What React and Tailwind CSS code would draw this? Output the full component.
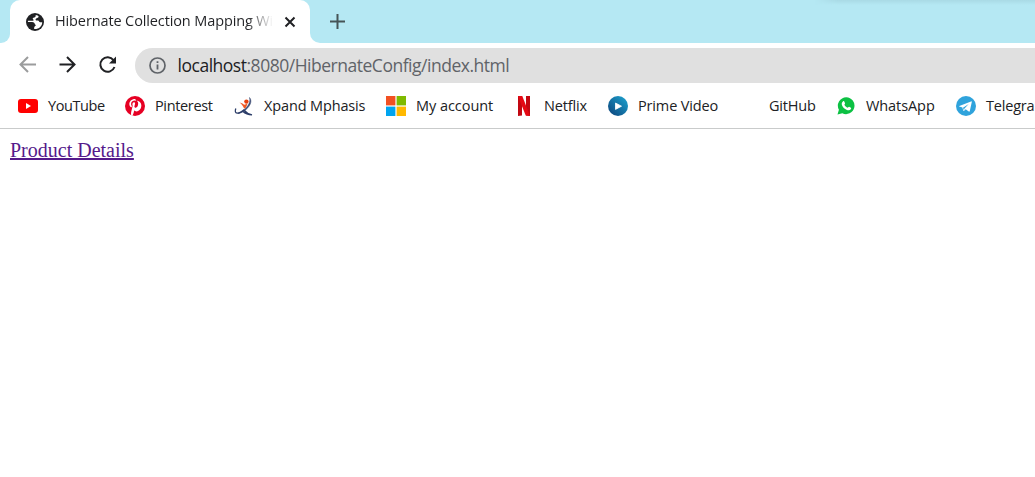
import React from "react";

function Globe() {
  return (
    <svg className="h-[18px] w-[18px] shrink-0" viewBox="0 0 18 18">
      <circle cx="9" cy="9" r="9" fill="#202124" />
      <path
        d="M9.600 1.900c.3 1 .1 1.700-.7 2.300-.8.5-2.200.3-2.200 1.300 0 .9 1.200.9.9 1.700-.3.8-1.500.6-2.400.6H2.100C1.900 8.200 1.900 8.600 1.900 9h4.300c1.300 0 2.300.7 2.500 1.800.1.8.9.8 1 1.500.1.7-.8.9-1.200 1.500-.5.8-.3 1.500-.3 2.200C13 16.300 16.200 13.200 16.200 9.200c-1 .1-2 .2-2.700-.3-.7-.5-.6-1.300-1.500-1.400-.8-.1-1.700.3-2.200-.3-.6-.7.2-1.500.9-1.900.9-.5 2-.6 1.900-1.700-.1-.8-1.400-1.500-3-1.700Z"
        fill="#fff"
      />
    </svg>
  );
}

const stroke = { fill: "none", strokeWidth: 2 };

function BackArrow() {
  return (
    <svg className="h-5 w-5 shrink-0" viewBox="0 0 20 20" stroke="#9b9c9d" {...stroke}>
      <path d="M18 9.500H3M10 2 2.500 9.500 10 17" />
    </svg>
  );
}

function ForwardArrow() {
  return (
    <svg className="h-5 w-5 shrink-0" viewBox="0 0 20 20" stroke="#202124" {...stroke}>
      <path d="M1.500 9.500h15M9 2l7.500 7.500L9 17" />
    </svg>
  );
}

function Reload() {
  return (
    <svg className="h-5 w-5 shrink-0" viewBox="0 0 20 20">
      <path d="M15.500 5.100A7.300 7.300 0 1 0 16.500 12" stroke="#202124" {...stroke} />
      <path d="M18 1.500V8.500H11Z" fill="#202124" />
    </svg>
  );
}

function YouTube() {
  return (
    <svg className="h-5 w-5" viewBox="0 0 20 20">
      <rect y="3" width="20" height="14" rx="3" fill="#f00" />
      <path d="m8 7 5 3-5 3Z" fill="#fff" />
    </svg>
  );
}

function Pinterest() {
  return (
    <svg className="h-5 w-5" viewBox="0 0 24 24">
      <circle cx="12" cy="12" r="12" fill="#e60023" />
      <path
        d="M12.300 4.200C7.600 4.200 5.200 7.300 5.200 10.300c0 1.900.8 3.300 2.200 3.900.3.1.5 0 .6-.3l.2-.9c.1-.3 0-.4-.2-.7-.5-.6-.7-1.100-.7-2.100 0-2.200 1.700-4.100 4.600-4.100 2.500 0 3.900 1.500 3.900 3.600 0 2.700-1.200 4.900-3 4.900-1 0-1.700-.8-1.500-1.800.3-1.200.8-2.400.8-3.300 0-.8-.4-1.500-1.300-1.500-1 0-1.900 1.100-1.900 2.600 0 .9.3 1.600.3 1.600l-1.800 7.700c-.3 1.300-.2 2.900 0 4.100l1.300.4c.6-.9 1.300-2.300 1.600-3.500l.8-3.200c.4.8 1.600 1.400 2.700 1.400 3.400 0 5.800-3.200 5.800-7.300 0-3.200-2.600-5.600-6.300-5.600Z"
        fill="#fff"
        transform="translate(0 -.6)"
      />
    </svg>
  );
}

function Xpand() {
  return (
    <svg className="h-5 w-5" viewBox="0 0 20 20">
      <circle cx="12.400" cy="5.600" r="2.200" fill="#e8400f" />
      <path d="M5.500 6.500C8 7 9.300 8 10.200 8.700l3.300-1-1.500 3.800-1.800 1.200C9 10 7.800 8.200 5.500 6.500Z" fill="#f15a24" />
      <path d="M15.500 1.500c2.600 3 1.300 7-1.700 10.300C11 15 7.500 17.200 4 17.500c3.300-1.300 6.200-3.300 8.600-6.200 2.600-3.200 4-6.500 2.900-9.800Z" fill="#3b4a72" stroke="#3b4a72" strokeWidth=".5" />
      <path d="M1.800 12.500c-1.100 3-.4 4.500 1.300 4.700 2 .1 4.500-1.400 6.700-3.200 2.200 2.600 4.800 4.200 8.200 4.800-4 0-6.800-1.100-9-3.300" fill="none" stroke="#2b3d68" strokeWidth="1.300" />
    </svg>
  );
}

function Microsoft() {
  return (
    <svg className="h-5 w-5" viewBox="0 0 20 20">
      <path d="M0 0h9.400v9.400H0Z" fill="#f25022" />
      <path d="M10.600 0H20v9.400h-9.400Z" fill="#7fba00" />
      <path d="M0 10.600h9.400V20H0Z" fill="#00a4ef" />
      <path d="M10.600 10.600H20V20h-9.400Z" fill="#ffb900" />
    </svg>
  );
}

function Netflix() {
  return (
    <svg className="h-5 w-5" viewBox="0 0 20 20">
      <path d="M4 0h4v19.500L4 20ZM12 0h4v20l-4-.5Z" fill="#c20812" />
      <path d="M4 0h4.300L16 20l-4.300-.5Z" fill="#e50914" />
    </svg>
  );
}

function PrimeVideo() {
  return (
    <svg className="h-5 w-5" viewBox="0 0 20 20">
      <defs>
        <linearGradient id="prime" x1="1" y1="0" x2="0" y2="1">
          <stop offset=".1" stopColor="#1c9dca" />
          <stop offset=".9" stopColor="#0d4a81" />
        </linearGradient>
      </defs>
      <circle cx="10" cy="10" r="10" fill="url(#prime)" />
      <path d="m7.500 7 6 3.200-6 3.200Z" fill="#fff" stroke="#fff" strokeWidth=".8" strokeLinejoin="round" />
    </svg>
  );
}

function WhatsApp() {
  return (
    <svg className="h-5 w-5" viewBox="0 0 20 20">
      <path d="M10.300 1.300a8.400 8.400 0 1 1-4 15.900L1.500 18.500l1.400-4.700A8.400 8.400 0 0 1 10.300 1.300Z" fill="#0cc143" />
      <path d="M6.900 5.400c.5-.5 1.100-.4 1.400.2l.7 1.600c.2.5-.6 1.200-.6 1.500.6 1.400 1.900 2.500 3.300 3 .4 0 .9-1.100 1.400-.9l1.800.9c.4.2.3 1-.1 1.600-.8 1.100-2.300 1.300-3.900.6-2.500-1-4.300-2.900-5-5-.4-1.500 0-2.700 1-3.500Z" fill="#fff" />
    </svg>
  );
}

function Telegram() {
  return (
    <svg className="h-5 w-5" viewBox="0 0 20 20">
      <circle cx="10" cy="10" r="10" fill="#2fa3dc" />
      <path d="M3.300 10 15 5.400c.5-.2.9.1.8.7l-2 9c-.1.6-.6.7-1.100.4l-3-2.200-1.500 1.500c-.5.5-.9.3-1-.2l-.8-3.100-3-.9c-.6-.2-.6-.4-.1-.6Z" fill="#fff" />
      <path d="m7 11.700 5.700-3.800-4.400 4.800-.3 2Z" fill="#2fa3dc" />
    </svg>
  );
}

const bookmarks = [
  { name: "YouTube", Icon: YouTube, box: "w-[107px]", track: "tracking-[-0.4px]" },
  { name: "Pinterest", Icon: Pinterest, box: "w-[109px]", track: "tracking-[-0.35px]" },
  { name: "Xpand Mphasis", Icon: Xpand, box: "w-[152px]", track: "tracking-[-0.14px]" },
  { name: "My account", Icon: Microsoft, box: "w-[128px]", track: "tracking-[-0.05px]" },
  { name: "Netflix", Icon: Netflix, box: "w-[94px]", track: "tracking-[-0.15px]" },
  { name: "Prime Video", Icon: PrimeVideo, box: "w-[131px]", track: "tracking-[-0.15px]" },
  { name: "GitHub", box: "w-[97px]", track: "tracking-[-0.2px]" },
  { name: "WhatsApp", Icon: WhatsApp, box: "w-[120px]", track: "tracking-[-0.08px]" },
  { name: "Telegra", Icon: Telegram, box: "w-[79px]", track: "tracking-[-0.2px]" },
];

export default function App() {
  return (
    <div className="h-[477px] w-[1035px] overflow-hidden bg-white font-['Open_Sans','Noto_Sans',sans-serif] text-[#202124]">
      <header className="relative flex h-[43px] bg-[#b5e8f3]">
        <div className="w-[10px] bg-white">
          <div className="h-full rounded-br-[9px] bg-[#b5e8f3]" />
        </div>
        <div className="bg-[#b5e8f3]">
          <div className="flex h-[43px] w-[300px] items-center rounded-t-[10px] bg-white pl-4">
            <Globe />
            <div className="mb-px ml-[11px] w-[218px] overflow-hidden whitespace-nowrap bg-linear-to-r from-[#202124] from-88% to-transparent bg-clip-text text-[14.500px] leading-5 tracking-[-0.12px] text-transparent">
              Hibernate Collection Mapping Wi
            </div>
            <svg className="ml-[11px] h-3 w-3 shrink-0" viewBox="0 0 12 12" stroke="#202124" {...stroke}>
              <path d="m1.500 1.500 9 9m0-9-9 9" />
            </svg>
          </div>
        </div>
        <div className="grow bg-white">
          <div className="flex h-full items-center rounded-bl-[10px] bg-[#b5e8f3] pl-5">
            <svg className="h-[15px] w-[15px]" viewBox="0 0 15 15" stroke="#465457" {...stroke}>
              <path d="M7.500 0v15M0 7.500h15" />
            </svg>
          </div>
        </div>
        <div className="absolute top-0 right-0 h-[5px] w-[220px] bg-linear-to-b from-[#a9dae5] to-[#b5e8f3] mask-l-from-90% mask-l-to-100%" />
      </header>

      <nav className="flex h-11 items-center pl-[18px]">
        <BackArrow />
        <div className="w-5" />
        <ForwardArrow />
        <div className="w-5" />
        <Reload />
        <div className="ml-[17px] flex h-[35px] grow items-center rounded-l-full bg-[#e0e0e0] pl-[14px]">
          <svg className="h-[17px] w-[17px]" viewBox="0 0 17 17">
            <circle cx="8.500" cy="8.500" r="7.500" fill="none" stroke="#5f6368" strokeWidth="1.700" />
            <path d="M7.600 7.500h1.800v5H7.600ZM7.600 4.300h1.800V6H7.600Z" fill="#5f6368" />
          </svg>
          <div className="ml-[11.500px] text-[17.500px] leading-6 tracking-[-0.48px] whitespace-nowrap text-[#5f6368]">
            <span className="text-[#202124]">localhost</span>:8080/HibernateConfig/index.html
          </div>
        </div>
      </nav>

      <div className="flex h-[42px] items-center border-b border-[#c9cbcb] pb-[4px] pl-[18px] text-[14.500px]">
        {bookmarks.map(({ name, Icon, box, track }) => (
          <div key={name} className={`flex shrink-0 items-center gap-[10px] ${box}`}>
            <div className="h-5 w-5 shrink-0">{Icon && <Icon />}</div>
            <span className={`leading-5 whitespace-nowrap ${track}`}>{name}</span>
          </div>
        ))}
      </div>

      <main className="pt-[8px] pl-[10px] font-['Liberation_Serif',serif] text-[20px] leading-[26px]">
        <a href="#product" className="text-[#551a8b] underline decoration-[1.500px] underline-offset-1">Product Details</a>
      </main>
    </div>
  );
}
